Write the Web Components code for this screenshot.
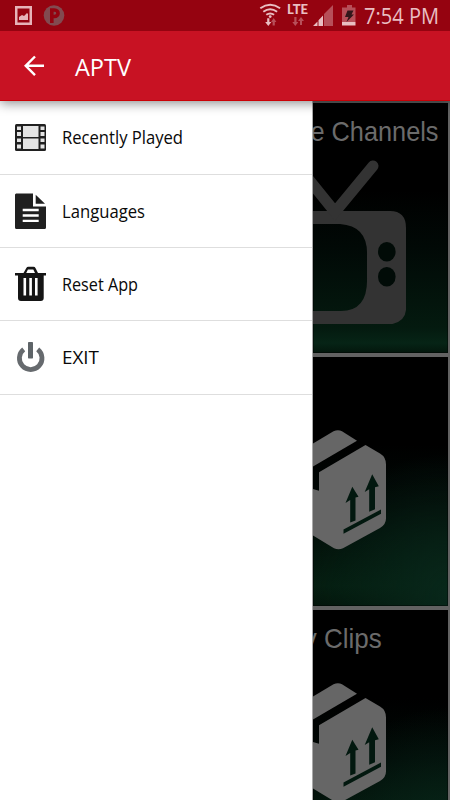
<!DOCTYPE html>
<html lang="en"><head><meta charset="utf-8"><title>APTV</title>
<style>html,body{margin:0;height:100%;overflow:hidden;background:#fff}</style></head>
<body><aptv-app></aptv-app>
<script>
function define(name, html) {
  const t = document.createElement('template');
  t.innerHTML = html;
  customElements.define(name, class extends HTMLElement {
    constructor() {
      super();
      this.attachShadow({mode: 'open'}).append(t.content.cloneNode(true));
    }
  });
}

/* One line of text fitted to a given width */
customElements.define('fit-text', class extends HTMLElement {
  connectedCallback() {
    const w = this.getAttribute('width'), s = this.getAttribute('size');
    const root = this.shadowRoot || this.attachShadow({mode: 'open'});
    root.innerHTML = `<style>:host{display:block}svg{display:block;overflow:visible}
      text{font-family:"Open Sans","Noto Sans",sans-serif;font-size:${s}px;fill:currentColor}</style>
      <svg width="${w}" height="${s}"><text y="${s * 0.86}" textLength="${w}" lengthAdjust="spacingAndGlyphs">${this.getAttribute('text')}</text></svg>`;
  }
});

const icons = {
  picture: ['15 6 17 19', '<path fill="#e6b3b8" fill-rule="evenodd" d="M15 6h17v19H15zM17.500 8.500v14h12v-14z"/><path fill="#e6b3b8" d="M19 20v-3l3-2 2 1 3-3 1 1v6z"/>'],
  pin: ['43 5 22 22', '<circle cx="54" cy="15.500" r="10.300" fill="#824a50"/><path fill="none" stroke="#950310" stroke-width="3.600" d="M51.800 23V10h2.500c5 0 5 6.500 0 6.500h-2.500"/>'],
  wifi: ['260 3 23 24', '<g fill="none" stroke="#e9bec2" stroke-width="2"><path d="M261.300 8.300q9.900-7 19.800 0M264.300 11.700q6.900-4.900 13.800 0M267.300 14.800q3.900-2.800 7.800 0"/></g><circle cx="271.200" cy="16.600" r="1.400" fill="#e9bec2"/><path fill="#e9bec2" d="M268.200 18.300h2.200v3.700h2l-3.100 4-3.100-4h2z"/><path fill="#b74f59" d="M273.600 25.500v-3.500h-1.600l2.700-4 2.700 4h-1.600v3.500z"/>'],
  lte: ['288 3 22 24', '<text x="288" y="14.200" textLength="21" lengthAdjust="spacingAndGlyphs" font-family="Lato,sans-serif" font-weight="900" font-size="12.500" fill="#e9bec2">LTE</text><path fill="#b74f59" d="M295.300 17h2.200v5h1.800l-3 4-3-4h2zM301 25v-4h-2l3-4 3 4h-2v4z"/>'],
  signal: ['314 5 21 21', '<path fill="#b74f59" d="M334 5v21h-9V14z"/><path fill="#e9bec2" d="M314 26l4.500-4.500V26zM319.500 26v-5.700l4.500-4.800V26z"/>'],
  battery: ['342 5 14 21', '<path fill="#b74f59" d="M347 5h5v2.500h3.500V22H342V7.500h5z"/><path fill="#e9bec2" d="M342 22h13.500v3.500H342z"/><path fill="#31161a" d="M347.500 10.500h6l-2 4h2.500L346.500 22l2-5H345z"/>'],
  back: ['24 55 21 21', '<path fill="none" stroke="#fff" stroke-width="2.400" d="M44 65.800H25.700M35 56.500l-9.300 9.300 9.300 9.300"/>'],
  film: ['14 123 33 29', '<rect x="15" y="124" width="31" height="27" rx="1.500" fill="#202020"/><g fill="#e4e4e4"><path d="M23 126h15.500v11H23zM23 138.500h15.500V149H23z"/><path d="M17 126.500h4v3.500h-4zM17 132h4v4h-4zM17 138.500h4v3.500h-4zM17 144.500h4v4h-4zM40.500 126.500h4v3.500h-4zM40.500 132h4v4h-4zM40.500 138.500h4v3.500h-4zM40.500 144.500h4v4h-4z"/></g>'],
  doc: ['14 191.500 33 38', '<path fill="#202020" d="M16 193h17v13h13v21q0 1.500-1.500 1.500h-28Q15 228.500 15 227v-33zM35.700 194.300l9.300 9h-9.300z"/><path stroke="#fff" stroke-width="2.300" d="M22.700 209.500h16M22.700 215h16M22.700 220.300h16"/>'],
  trash: ['14 266 33 37', '<path fill="#151515" fill-rule="evenodd" d="M15 273h8.500l2.700-4.800q.7-1.400 2.200-1.400h5q1.500 0 2.200 1.400l2.400 4.800h8v2.600h-2.300V298q0 3-3 3H21q-3 0-3-3v-22.400h-3zM26.200 273h8.800l-1.700-3.500h-5.400z"/><path fill="#fff" d="M23.500 278h2.600v17.500h-2.600zM29.300 278h2.600v17.500h-2.600zM35 278h2.600v17.500H35z"/>'],
  power: ['14 339.500 33 36', '<path fill="none" stroke="#666a6e" stroke-width="4.800" d="M23.700 348.900a11.300 11.300 0 1 0 14 0"/><rect x="28" y="341.500" width="5" height="16.500" rx=".7" fill="#5e6468"/>']
};
customElements.define('app-icon', class extends HTMLElement {
  connectedCallback() {
    const [box, art] = icons[this.getAttribute('name')], b = box.split(' ');
    const root = this.shadowRoot || this.attachShadow({mode: 'open'});
    root.innerHTML = `<style>:host{display:block;flex:none}svg{display:block}</style><svg width="${b[2]}" height="${b[3]}" viewBox="${box}">${art}</svg>`;
  }
});

define('status-bar', `<style>:host{display:flex;height:31px;background:#950310;color:#e9bec2;box-sizing:border-box;padding:0 11px 0 15px;align-items:flex-start;z-index:3}
  .l,.r{display:flex}.l{gap:11px;padding-top:6px}.l :last-child{margin-top:-1px}.r{margin-left:auto;padding-top:3px;align-items:flex-start}
  .r app-icon{margin-right:5px}.r .t{margin-right:4px}.r .s{margin:2px 7px 0 0}.r .b{margin:2px 8px 0 1px}.r fit-text{margin-top:3px}</style>
  <div class="l"><app-icon name="picture"></app-icon><app-icon name="pin"></app-icon></div>
  <div class="r"><app-icon name="wifi"></app-icon><app-icon class="t" name="lte"></app-icon><app-icon class="s" name="signal"></app-icon><app-icon class="b" name="battery"></app-icon><fit-text text="7:54 PM" width="75" size="21"></fit-text></div>`);

define('tool-bar', `<style>:host{display:flex;height:70px;background:#c81223;border-bottom:1px solid #cb0006;box-sizing:border-box;padding:0 24px;gap:30px;color:#fff;align-items:center;box-shadow:0 2px 11px #0007;z-index:2}
  fit-text{margin-top:2px}app-icon{margin-top:0}</style><app-icon name="back"></app-icon><fit-text text="APTV" width="56" size="24"></fit-text>`);

define('menu-row', `<style>:host{display:flex;align-items:center;box-sizing:border-box;height:73.300px;border-bottom:1px solid #dedede;padding-left:14px;gap:14.500px;color:#090909}::slotted(fit-text){margin-top:1px}</style><slot></slot>`);

define('nav-drawer', `<style>:host{display:block;width:313px;flex:none;box-sizing:border-box;background:#fff;border-right:1px solid #aaa}</style>
  <menu-row style="height:73.800px"><app-icon name="film"></app-icon><fit-text text="Recently Played" width="121" size="17.500"></fit-text></menu-row>
  <menu-row><app-icon name="doc"></app-icon><fit-text text="Languages" width="83" size="17.500"></fit-text></menu-row>
  <menu-row><app-icon name="trash"></app-icon><fit-text text="Reset App" width="76" size="17.500"></fit-text></menu-row>
  <menu-row><app-icon name="power"></app-icon><fit-text text="EXIT" width="37" size="17.500"></fit-text></menu-row>`);

const box = '<path fill="#666" d="M313 443l20.500-12.300q4.500-2 8.500 0l15 9.500L313 466z"/><path fill="#666" d="M319 471.700l46.500-27.200 14.500 8.500q6 3.500 6 11v54q0 6-6 9.500l-37 20.200q-4.500 2-9 0L313 535v-46.500l6 1.800z"/><path fill="#02180f" d="M352.300 486.300l6.200 10-3 .7v23l-5.300 2v-22.500l-4.700 3zM372.200 473.700l6.600 12-3.800 1v22l-5.800 2.500v-22.500l-4.500 2.800zM343.500 529l37.500-20v4.200l-37.500 20z"/>';
const tv = '<path fill="#333" fill-rule="evenodd" d="M313 211h77q16 0 16 17v82q-1 11-13.500 14H313v-13h28q27 0 26-33v-23q1-29-27-31h-27z"/><path fill="none" stroke="#333" stroke-width="11" stroke-linecap="round" d="M306 176l29 36 38-46"/><g fill="#010b07"><ellipse cx="386.800" cy="251.700" rx="8.800" ry="9.800"/><ellipse cx="386.800" cy="276.800" rx="8.800" ry="9.800"/></g>';
customElements.define('channel-tile', class extends HTMLElement {
  connectedCallback() {
    const top = this.getAttribute('top'), art = this.getAttribute('art') === 'tv' ? tv : box;
    const label = this.getAttribute('label') || '', end = this.getAttribute('end'), len = this.getAttribute('len');
    const root = this.shadowRoot || this.attachShadow({mode: 'open'});
    root.innerHTML = `<style>:host{display:block;height:249.500px;width:135px;background:radial-gradient(circle at 100% 95%,#08271a 0,transparent 140px),linear-gradient(#000 35%,#010906 60%,#041d10 92%,#02140a);box-shadow:inset 0 0 0 1px #0006;overflow:hidden}
      :host([art=tv]){background:linear-gradient(#000 35%,#010906 58%,#041a0f 90%,#062416 96%,#03160c)}
      svg{display:block}text{font-family:"Liberation Sans",Arial,sans-serif;font-size:28.500px;fill:#6b6b6b}</style>
      <svg width="135" height="250" viewBox="313 ${top} 135 250">${art}${label ? `<text x="${end - len}" y="${+top + 37.500}" textLength="${len}" lengthAdjust="spacingAndGlyphs">${label}</text>` : ''}</svg>`;
  }
});

define('tile-column', `<style>:host{display:flex;flex-direction:column;gap:4px;flex:1;background:#626262;padding-top:2px;overflow:hidden}channel-tile{flex:none}</style>
  <channel-tile art="tv" top="103" label="e Channels" end="438.500" len="128"></channel-tile>
  <channel-tile top="356.500"></channel-tile>
  <channel-tile top="356.500" label="y Clips" end="381.800" len="78"></channel-tile>`);

define('aptv-app', `<style>:host{display:flex;flex-direction:column;width:450px;height:800px;overflow:hidden}main{display:flex;flex:1;min-height:0}</style>
  <status-bar></status-bar><tool-bar></tool-bar><main><nav-drawer></nav-drawer><tile-column></tile-column></main>`);
</script></body></html>
